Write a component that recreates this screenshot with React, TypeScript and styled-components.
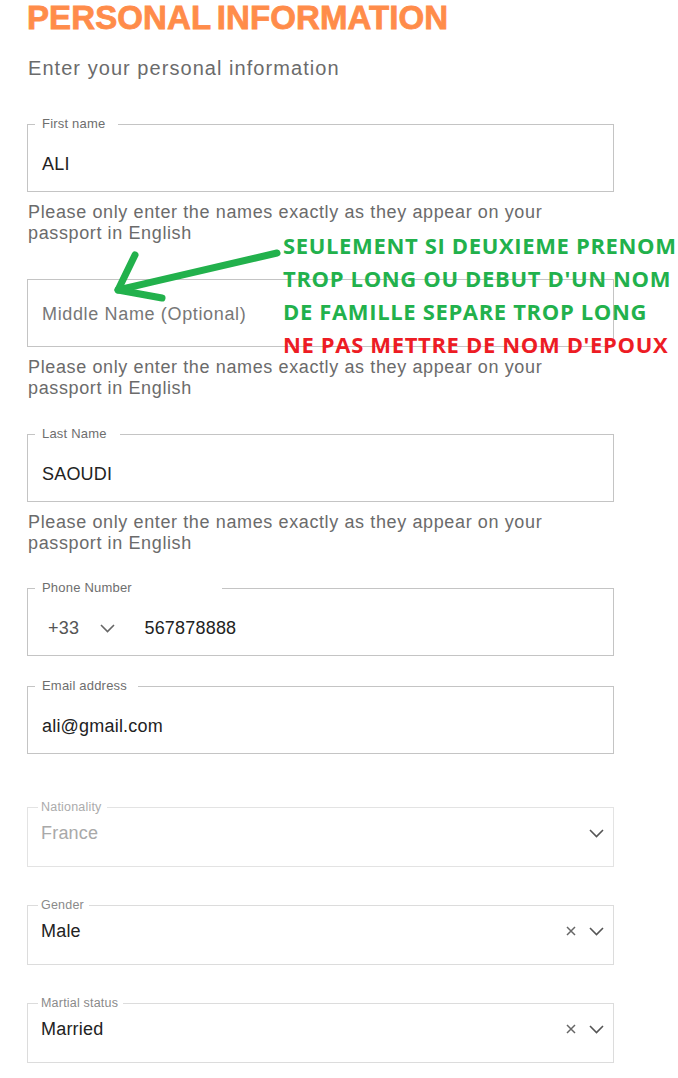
import React from "react";
import styled, { createGlobalStyle } from "styled-components";

const Global = createGlobalStyle`
  html, body { margin: 0; padding: 0; background: #ffffff; }
  body { font-family: "Liberation Sans", Arial, sans-serif; }
  * { box-sizing: border-box; }
`;

const Page = styled.div`
  position: relative;
  width: 678px;
  height: 1078px;
  overflow: hidden;
  padding: 2px 0 0 27px;
`;

const Title = styled.h1`
  margin: 0;
  font-family: "Liberation Sans", Arial, sans-serif;
  font-weight: 700;
  font-size: 33px;
  line-height: 32px;
  color: #ff8c4a;
  -webkit-text-stroke: 0.8px #ff8c4a;
  word-spacing: -3px;
  letter-spacing: 0.1px;
`;

const Subtitle = styled.p`
  margin: 22px 0 0 1px;
  font-size: 20px;
  line-height: 24px;
  color: #6b6b6b;
  letter-spacing: 1.05px;
`;

const Form = styled.div`
  display: flex;
  flex-direction: column;
  width: 587px;
`;

const Block = styled.div<{ $top: number }>`
  margin-top: ${(p) => p.$top}px;
`;

type Variant = "text" | "select" | "bare";

const Box = styled.fieldset<{ $variant: Variant; $disabled?: boolean }>`
  margin: 0;
  min-width: 0;
  border-radius: 0;
  border: 1px solid
    ${(p) => (p.$disabled ? "#e3e3e3" : p.$variant === "select" ? "#dcdcdc" : "#c4c4c4")};
  padding: ${(p) => (p.$variant === "select" ? "0 9px 0 10px" : "0 8px 0 7px")};
`;

const Legend = styled.legend<{ $variant: Variant; $disabled?: boolean; $extra?: number }>`
  padding: ${(p) =>
    p.$variant === "select" ? "0 5px 0 3px" : `0 ${p.$extra ?? 13}px 0 7px`};
  font-size: ${(p) => (p.$variant === "select" ? "12.5px" : "13px")};
  letter-spacing: 0.2px;
  line-height: 14px;
  color: ${(p) => (p.$disabled ? "#ababab" : p.$variant === "select" ? "#8a8a8a" : "#6e6e6e")};
`;

const rowPadding: Record<Variant, string> = {
  text: "22px 0 16px 7px",
  bare: "23px 0 21px 7px",
  select: "8px 0 22px 3px",
};

const rowHeight: Record<Variant, number> = {
  text: 60,
  bare: 66,
  select: 52,
};

const Row = styled.div<{ $variant: Variant }>`
  display: flex;
  align-items: center;
  padding: ${(p) => rowPadding[p.$variant]};
  height: ${(p) => rowHeight[p.$variant]}px;
`;

const Value = styled.span<{ $muted?: boolean; $placeholder?: boolean }>`
  flex: 1;
  font-size: 18px;
  line-height: 22px;
  letter-spacing: ${(p) => (p.$placeholder ? "0.65px" : "0.2px")};
  color: ${(p) => (p.$muted ? "#a9a9a9" : p.$placeholder ? "#777777" : "#222222")};
`;

const Prefix = styled.span`
  font-size: 18px;
  line-height: 22px;
  color: #555555;
  letter-spacing: 0.3px;
  margin-left: 6px;
`;

const PrefixChevron = styled.span`
  display: inline-flex;
  margin: 0 29px 0 21px;
`;

const Icons = styled.div`
  display: flex;
  align-items: center;
  gap: 13px;
`;

const Helper = styled.p`
  margin: 10px 0 0 1px;
  max-width: 560px;
  font-size: 18px;
  line-height: 21px;
  letter-spacing: 0.62px;
  color: #6b6b6b;
`;

const Note = styled.div`
  position: absolute;
  left: 283px;
  top: 229px;
  font-family: "Open Sans", "Noto Sans", sans-serif;
  font-weight: 700;
  font-size: 22px;
  line-height: 33px;
  letter-spacing: 0.65px;
  white-space: nowrap;
`;

const NoteLine = styled.div<{ $red?: boolean }>`
  color: ${(p) => (p.$red ? "#ed1c24" : "#22b14c")};
`;

const Arrow = styled.svg`
  position: absolute;
  left: 100px;
  top: 240px;
`;

const Chevron = ({ color = "#555" }: { color?: string }) => (
  <svg width="15" height="9" viewBox="0 0 15 9">
    <polyline points="1,1 7.5,7.5 14,1" fill="none" stroke={color} strokeWidth="1.6" />
  </svg>
);

const Clear = () => (
  <svg width="10" height="10" viewBox="0 0 10 10">
    <path d="M1 1 L9 9 M9 1 L1 9" stroke="#666" strokeWidth="1.5" fill="none" />
  </svg>
);

const TextField = ({
  label,
  value,
  placeholder,
  extra,
}: {
  label?: string;
  value?: string;
  placeholder?: string;
  extra?: number;
}) => {
  const variant: Variant = label ? "text" : "bare";
  return (
    <Box $variant={variant}>
      {label ? (
        <Legend $variant={variant} $extra={extra}>
          {label}
        </Legend>
      ) : null}
      <Row $variant={variant}>
        {value ? <Value>{value}</Value> : <Value $placeholder>{placeholder}</Value>}
      </Row>
    </Box>
  );
};

const PhoneField = () => (
  <Box $variant="text">
    <Legend $variant="text" $extra={90}>
      Phone Number
    </Legend>
    <Row $variant="text">
      <Prefix>+33</Prefix>
      <PrefixChevron>
        <Chevron color="#666" />
      </PrefixChevron>
      <Value>567878888</Value>
    </Row>
  </Box>
);

const SelectField = ({
  label,
  value,
  disabled,
  clearable,
}: {
  label: string;
  value: string;
  disabled?: boolean;
  clearable?: boolean;
}) => (
  <Box $variant="select" $disabled={disabled}>
    <Legend $variant="select" $disabled={disabled}>
      {label}
    </Legend>
    <Row $variant="select">
      <Value $muted={disabled}>{value}</Value>
      <Icons>
        {clearable ? <Clear /> : null}
        <Chevron />
      </Icons>
    </Row>
  </Box>
);

const helper = "Please only enter the names exactly as they appear on your passport in English";

export default function App() {
  return (
    <Page>
      <Global />
      <Title>PERSONAL INFORMATION</Title>
      <Subtitle>Enter your personal information</Subtitle>
      <Form>
        <Block $top={37}>
          <TextField label="First name" value="ALI" />
          <Helper>{helper}</Helper>
        </Block>
        <Block $top={35}>
          <TextField placeholder="Middle Name (Optional)" />
          <Helper>{helper}</Helper>
        </Block>
        <Block $top={28}>
          <TextField label="Last Name" value="SAOUDI" />
          <Helper>{helper}</Helper>
        </Block>
        <Block $top={27}>
          <PhoneField />
        </Block>
        <Block $top={23}>
          <TextField label="Email address" value="ali@gmail.com" extra={11} />
        </Block>
        <Block $top={46}>
          <SelectField label="Nationality" value="France" disabled />
        </Block>
        <Block $top={31}>
          <SelectField label="Gender" value="Male" clearable />
        </Block>
        <Block $top={31}>
          <SelectField label="Martial status" value="Married" clearable />
        </Block>
      </Form>
      <Arrow width="190" height="70" viewBox="0 0 190 70">
        <g fill="none" stroke="#22b14c" strokeWidth="7" strokeLinecap="round" strokeLinejoin="round">
          <path d="M177 13 C 120 26, 70 38, 18 50" />
          <path d="M35 15 L18 50 L62 58" />
        </g>
      </Arrow>
      <Note>
        <NoteLine>SEULEMENT SI DEUXIEME PRENOM</NoteLine>
        <NoteLine>TROP LONG OU DEBUT D'UN NOM</NoteLine>
        <NoteLine>DE FAMILLE SEPARE TROP LONG</NoteLine>
        <NoteLine $red>NE PAS METTRE DE NOM D'EPOUX</NoteLine>
      </Note>
    </Page>
  );
}
